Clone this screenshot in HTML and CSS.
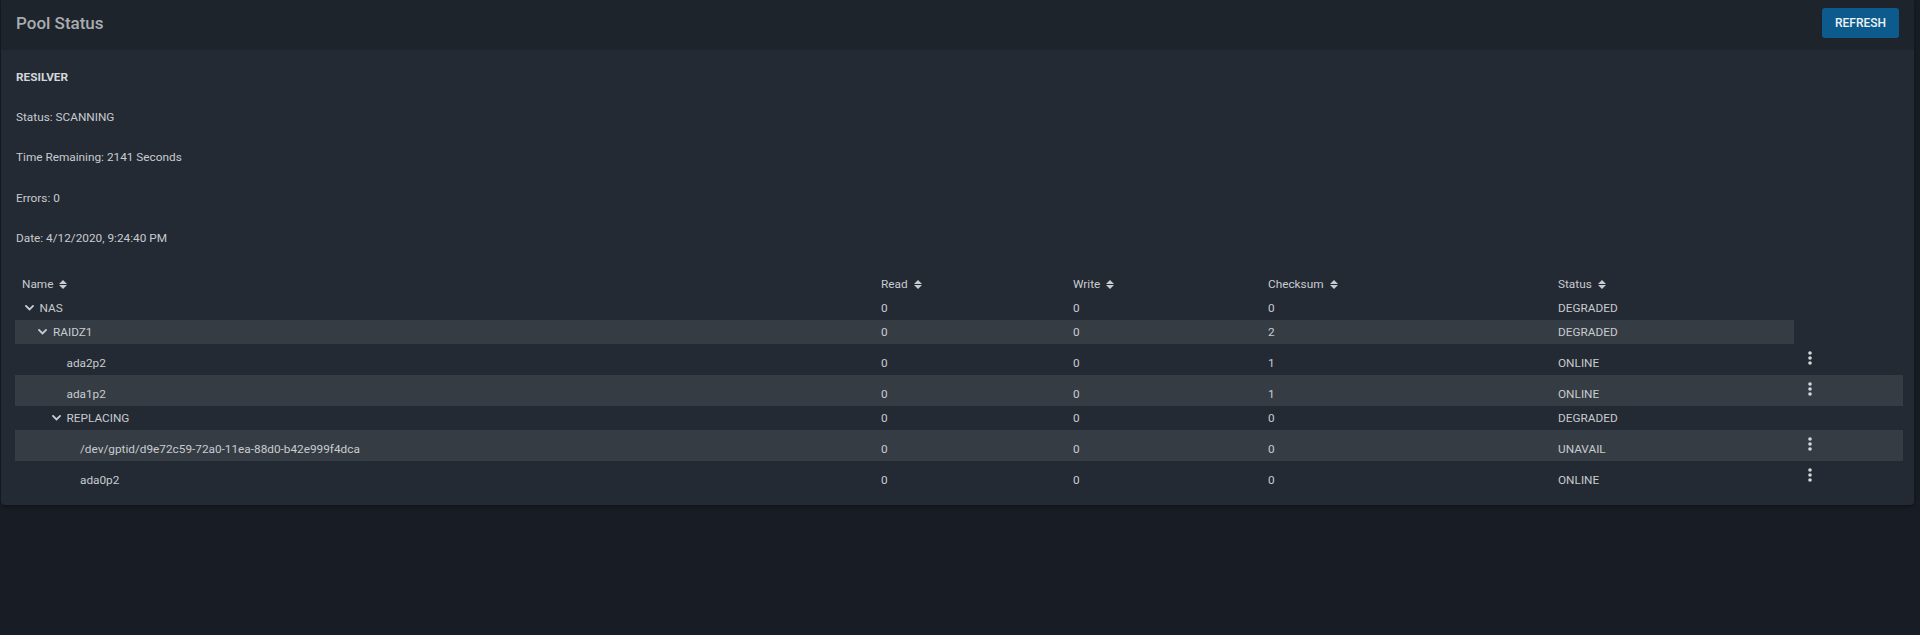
FILE: index.html
```html
<!DOCTYPE html>
<html lang="en">
<head>
<meta charset="utf-8">
<title>Pool Status</title>
<link rel="stylesheet" href="styles.css">
</head>
<body>
<div class="card">
  <div class="card-header">
    <div class="title">Pool Status</div>
    <button class="btn">REFRESH</button>
  </div>
  <div class="card-body">
    <p class="info info--head">RESILVER</p>
    <p class="info">Status: SCANNING</p>
    <p class="info">Time Remaining: 2141 Seconds</p>
    <p class="info">Errors: 0</p>
    <p class="info">Date: 4/12/2020, 9:24:40 PM</p>

    <div class="table">
      <div class="row row--header">
        <div class="cell cell--name-h">Name <svg class="sort" viewBox="0 0 8 9"><path d="M0 4 L4 0 L8 4Z M0 5 L4 9 L8 5Z"/></svg></div>
        <div class="cell">Read <svg class="sort" viewBox="0 0 8 9"><path d="M0 4 L4 0 L8 4Z M0 5 L4 9 L8 5Z"/></svg></div>
        <div class="cell">Write <svg class="sort" viewBox="0 0 8 9"><path d="M0 4 L4 0 L8 4Z M0 5 L4 9 L8 5Z"/></svg></div>
        <div class="cell">Checksum <svg class="sort" viewBox="0 0 8 9"><path d="M0 4 L4 0 L8 4Z M0 5 L4 9 L8 5Z"/></svg></div>
        <div class="cell">Status <svg class="sort" viewBox="0 0 8 9"><path d="M0 4 L4 0 L8 4Z M0 5 L4 9 L8 5Z"/></svg></div>
      </div>

      <div class="row">
        <div class="cell cell--name lvl0"><svg class="chev" viewBox="0 0 9 6"><path d="M1 1 L4.5 4.5 L8 1"/></svg>NAS</div>
        <div class="cell">0</div><div class="cell">0</div><div class="cell">0</div><div class="cell">DEGRADED</div>
      </div>

      <div class="row row--striped">
        <div class="cell cell--name lvl1"><svg class="chev" viewBox="0 0 9 6"><path d="M1 1 L4.5 4.5 L8 1"/></svg>RAIDZ1</div>
        <div class="cell">0</div><div class="cell">0</div><div class="cell">2</div><div class="cell">DEGRADED</div>
      </div>

      <div class="row row--actions">
        <div class="cell cell--name lvl2"><span class="spacer"></span>ada2p2</div>
        <div class="cell">0</div><div class="cell">0</div><div class="cell">1</div><div class="cell">ONLINE</div>
        <div class="cell cell--actions"><svg class="dots" viewBox="0 0 4 14"><circle cx="2" cy="2" r="1.8"/><circle cx="2" cy="7" r="1.8"/><circle cx="2" cy="12" r="1.8"/></svg></div>
      </div>

      <div class="row row--actions row--striped">
        <div class="cell cell--name lvl2"><span class="spacer"></span>ada1p2</div>
        <div class="cell">0</div><div class="cell">0</div><div class="cell">1</div><div class="cell">ONLINE</div>
        <div class="cell cell--actions"><svg class="dots" viewBox="0 0 4 14"><circle cx="2" cy="2" r="1.8"/><circle cx="2" cy="7" r="1.8"/><circle cx="2" cy="12" r="1.8"/></svg></div>
      </div>

      <div class="row">
        <div class="cell cell--name lvl2"><svg class="chev" viewBox="0 0 9 6"><path d="M1 1 L4.5 4.5 L8 1"/></svg>REPLACING</div>
        <div class="cell">0</div><div class="cell">0</div><div class="cell">0</div><div class="cell">DEGRADED</div>
      </div>

      <div class="row row--actions row--striped">
        <div class="cell cell--name lvl3"><span class="spacer"></span>/dev/gptid/d9e72c59-72a0-11ea-88d0-b42e999f4dca</div>
        <div class="cell">0</div><div class="cell">0</div><div class="cell">0</div><div class="cell">UNAVAIL</div>
        <div class="cell cell--actions"><svg class="dots" viewBox="0 0 4 14"><circle cx="2" cy="2" r="1.8"/><circle cx="2" cy="7" r="1.8"/><circle cx="2" cy="12" r="1.8"/></svg></div>
      </div>

      <div class="row row--actions">
        <div class="cell cell--name lvl3"><span class="spacer"></span>ada0p2</div>
        <div class="cell">0</div><div class="cell">0</div><div class="cell">0</div><div class="cell">ONLINE</div>
        <div class="cell cell--actions"><svg class="dots" viewBox="0 0 4 14"><circle cx="2" cy="2" r="1.8"/><circle cx="2" cy="7" r="1.8"/><circle cx="2" cy="12" r="1.8"/></svg></div>
      </div>
    </div>
  </div>
</div>
</body>
</html>
```

FILE: styles.css
```css
html, body {
  margin: 0;
  padding: 0;
  background: #181d25;
  height: 100%;
}

body {
  font-family: Roboto, "Liberation Sans", Arial, sans-serif;
  font-size: 11.8px;
  color: #c8cbcf;
}

.card {
  margin: 0 6px 0 1px;
  background: #232a33;
  border-radius: 0 0 4px 4px;
  box-shadow: 0 2px 4px rgba(0, 0, 0, 0.35);
  overflow: hidden;
}

.card-header {
  height: 50px;
  box-sizing: border-box;
  background: #1e242b;
  display: flex;
  justify-content: space-between;
  align-items: flex-start;
  padding: 8px 15px 0 15px;
}

.title {
  font-size: 17px;
  font-weight: 500;
  line-height: 30px;
  color: #a9adb1;
}

.btn {
  height: 30px;
  padding: 0 13px;
  border: none;
  border-radius: 3px;
  background: #0d5a8c;
  color: #eef2f6;
  font-family: Roboto, "Liberation Sans", Arial, sans-serif;
  font-size: 12px;
  font-weight: 500;
  letter-spacing: 0;
}

.card-body {
  padding: 19px 13px 13px 14px;
}

.info {
  margin: 0 0 24.2px 1px;
  line-height: 16px;
  color: #c8cbcf;
}

.info--head {
  font-weight: 700;
  color: #d4d7da;
}

.table {
  margin-top: 26px;
  display: flex;
  flex-direction: column;
  align-items: flex-start;
}

.row {
  display: grid;
  grid-template-columns: 866px 192px 195px 290px 236px;
  height: 24px;
  align-items: end;
}

.row--header {
  height: 24.5px;
}

.row--actions {
  grid-template-columns: 866px 192px 195px 290px 236px 109px;
  height: 31px;
}

.row--striped {
  background: #363c44;
}

.cell {
  display: flex;
  align-items: center;
  line-height: 16px;
  padding-bottom: 4px;
  white-space: nowrap;
}

.cell--name-h {
  padding-left: 7px;
}

.cell--name.lvl0 { padding-left: 9.5px; }
.cell--name.lvl1 { padding-left: 23px; }
.cell--name.lvl2 { padding-left: 36.5px; }
.cell--name.lvl3 { padding-left: 50px; }

.chev {
  width: 9px;
  height: 6px;
  margin-right: 6px;
  fill: none;
  stroke: #c8cbcf;
  stroke-width: 1.8;
  stroke-linecap: square;
}

.spacer {
  width: 15px;
  height: 1px;
  flex: none;
}

.sort {
  width: 8px;
  height: 9px;
  margin-left: 6px;
  fill: #c8cbcf;
}

.cell--actions {
  align-self: start;
  padding: 7px 0 0 14px;
}

.dots {
  width: 4px;
  height: 14px;
  fill: #d4d7da;
}
```
